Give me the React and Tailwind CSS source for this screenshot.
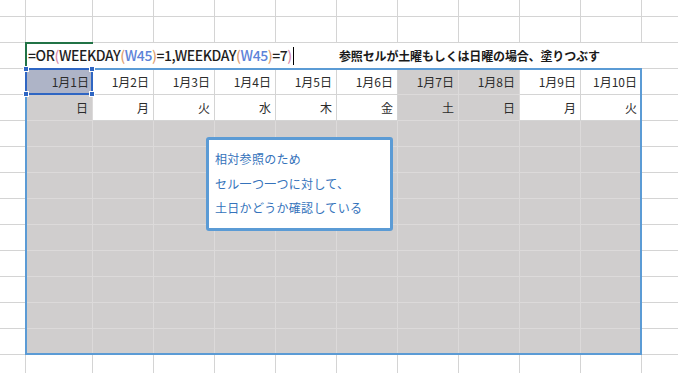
import React from "react";

const cols = [26, 67, 61, 61, 61, 61, 61, 61, 61, 61, 61, 37];
const dates = ["1月1日", "1月2日", "1月3日", "1月4日", "1月5日", "1月6日", "1月7日", "1月8日", "1月9日", "1月10日"];
const days = ["日", "月", "火", "水", "木", "金", "土", "日", "月", "火"];
const weekend = [true, false, false, false, false, false, true, true, false, false];

const font = { fontFamily: '"Noto Sans CJK JP", "Noto Sans", sans-serif' };

function PlainRow({ h }) {
  return (
    <div className="flex" style={{ height: h }}>
      {cols.map((w, i) => (
        <div key={i} className="shrink-0 border-r border-b border-[#d4d4d4]" style={{ width: w }} />
      ))}
    </div>
  );
}

function DataRow({ items, greyAll, firstGrey }) {
  return (
    <div className="flex h-[26px]">
      <div className="shrink-0 w-[26px] border-r border-b border-[#d4d4d4]" />
      {items.map((t, i) => {
        const grey = greyAll || (firstGrey && weekend[i]);
        return (
          <div
            key={i}
            style={{ width: cols[i + 1] }}
            className={`shrink-0 flex items-center justify-end pr-[4px] pt-[1px] text-[12px] text-[#2b2b2b] border-r border-b ${
              grey ? "bg-[#d0cece] border-[#dcdada]" : "bg-white border-[#d4d4d4]"
            }`}
          >
            {t}
          </div>
        );
      })}
      <div className="shrink-0 w-[37px] border-r border-b border-[#d4d4d4]" />
    </div>
  );
}

export default function App() {
  return (
    <div className="relative w-[678px] h-[373px] overflow-hidden bg-white" style={font}>
      <PlainRow h={17} />
      <PlainRow h={26} />

      {/* formula row */}
      <div className="flex h-[26px] border-b border-[#d4d4d4]">
        <div className="shrink-0 w-[26px]" />
        <div className="shrink-0 w-[311px] flex items-center pl-[2px] text-[14px] font-medium text-[#1f1f1f] tracking-[-0.45px]">
          <span>=OR</span>
          <span className="text-[#d98aab]">(</span>
          <span>WEEKDAY</span>
          <span className="text-[#e0a070]">(</span>
          <span className="text-[#5d83d8]">W45</span>
          <span className="text-[#e0a070]">)</span>
          <span>=1,WEEKDAY</span>
          <span className="text-[#e0a070]">(</span>
          <span className="text-[#5d83d8]">W45</span>
          <span className="text-[#e0a070]">)</span>
          <span>=7</span>
          <span className="text-[#d98aab]">)</span>
          <span className="ml-[1px] w-[1px] h-[18px] bg-black" />
        </div>
        <div className="flex-1 flex items-center pl-[2px] text-[12px] font-bold text-[#1a1a1a] tracking-[-0.15px]">
          参照セルが土曜もしくは日曜の場合、塗りつぶす
        </div>
      </div>

      <DataRow items={dates} firstGrey />
      <DataRow items={days} firstGrey />
      {Array.from({ length: 9 }).map((_, i) => (
        <DataRow key={i} items={Array(10).fill("")} greyAll />
      ))}
      <PlainRow h={26} />

      {/* active cell green edit marker */}
      <div className="absolute left-[25px] top-[42px] w-[68px] h-[2px] bg-[#217346]" />
      <div className="absolute left-[25px] top-[42px] w-[2px] h-[27px] bg-[#217346]" />

      {/* selection outline */}
      <div className="absolute left-[25px] top-[68px] w-[617px] h-[287px] border-2 border-[#5b9bd5] pointer-events-none" />

      {/* selected cell */}
      <div className="absolute left-[25px] top-[68px] w-[68px] h-[27px] border-2 border-[#2f66c3] bg-[#aeb4c7] flex items-center justify-end pr-[2px] pt-[1px] text-[12px] text-[#2b2b2b]">
        1月1日
        <span className="absolute -left-[4px] -top-[4px] w-[6px] h-[6px] bg-[#2f66c3] border border-white" />
        <span className="absolute -right-[4px] -top-[4px] w-[6px] h-[6px] bg-[#2f66c3] border border-white" />
        <span className="absolute -left-[4px] -bottom-[4px] w-[6px] h-[6px] bg-[#2f66c3] border border-white" />
        <span className="absolute -right-[4px] -bottom-[4px] w-[6px] h-[6px] bg-[#2f66c3] border border-white" />
      </div>

      {/* callout */}
      <div className="absolute left-[206px] top-[137px] w-[187px] h-[94px] rounded-[3px] border-[3px] border-[#5b9bd5] bg-white pl-[6px] pt-[7px] text-[12px] leading-[24.5px] text-[#3573bb] tracking-[0.3px]">
        <div>相対参照のため</div>
        <div>セル一つ一つに対して、</div>
        <div>土日かどうか確認している</div>
      </div>
    </div>
  );
}
